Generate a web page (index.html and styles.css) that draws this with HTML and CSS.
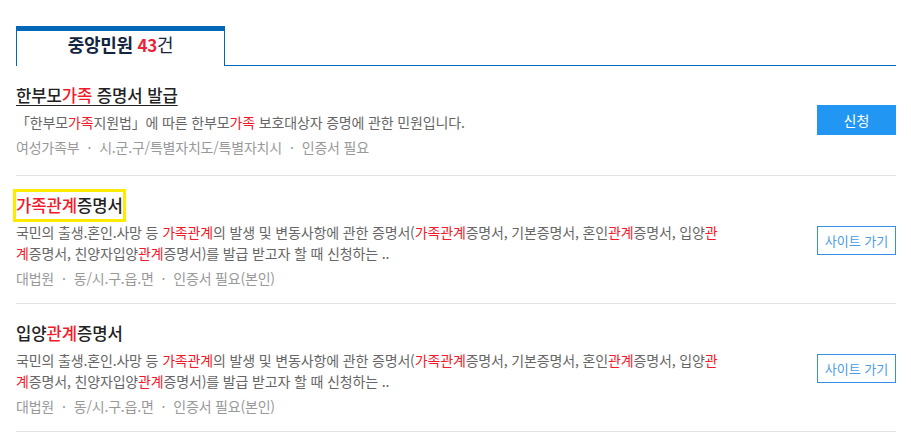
FILE: index.html
```html
<!DOCTYPE html>
<html lang="ko">
<head>
    <meta charset="UTF-8">
    <meta name="viewport" content="width=device-width, initial-scale=1.0">
    <title>중앙민원</title>
    <link rel="stylesheet" href="styles.css">
</head>
<body>
    <div class="container">
        <div class="tabs">
            <div class="tab">중앙민원 <span class="count">43</span><span class="unit">건</span></div>
        </div>

        <ul class="list">
            <li class="item">
                <div class="info">
                    <a class="title underline" href="#">한부모<span class="hl">가족</span> 증명서 발급</a>
                    <p class="desc">「한부모<span class="hl">가족</span>지원법」에 따른 한부모<span class="hl">가족</span> 보호대상자 증명에 관한 민원입니다.</p>
                    <p class="meta">여성가족부<span class="dot">·</span>시.군.구/특별자치도/특별자치시<span class="dot">·</span>인증서 필요</p>
                </div>
                <button class="btn btn-apply">신청</button>
            </li>
            <li class="item">
                <div class="info">
                    <a class="title focused" href="#"><span class="hl">가족관계</span>증명서</a>
                    <p class="desc">국민의 출생.혼인.사망 등 <span class="hl">가족관계</span>의 발생 및 변동사항에 관한 증명서(<span class="hl">가족관계</span>증명서, 기본증명서, 혼인<span class="hl">관계</span>증명서, 입양<span class="hl">관계</span>증명서, 친양자입양<span class="hl">관계</span>증명서)를 발급 받고자 할 때 신청하는 ..</p>
                    <p class="meta">대법원<span class="dot">·</span>동/시.구.읍.면<span class="dot">·</span>인증서 필요(본인)</p>
                </div>
                <button class="btn btn-site">사이트 가기</button>
            </li>
            <li class="item">
                <div class="info">
                    <a class="title" href="#">입양<span class="hl">관계</span>증명서</a>
                    <p class="desc">국민의 출생.혼인.사망 등 <span class="hl">가족관계</span>의 발생 및 변동사항에 관한 증명서(<span class="hl">가족관계</span>증명서, 기본증명서, 혼인<span class="hl">관계</span>증명서, 입양<span class="hl">관계</span>증명서, 친양자입양<span class="hl">관계</span>증명서)를 발급 받고자 할 때 신청하는 ..</p>
                    <p class="meta">대법원<span class="dot">·</span>동/시.구.읍.면<span class="dot">·</span>인증서 필요(본인)</p>
                </div>
                <button class="btn btn-site">사이트 가기</button>
            </li>
        </ul>
    </div>
</body>
</html>
```

FILE: styles.css
```css
body {
    margin: 0;
    background: #fff;
    font-family: "Noto Sans CJK KR", "Noto Sans", sans-serif;
    color: #222;
}
.container {
    width: 880px;
    padding: 26px 0 0 16px;
}
.tabs {
    display: flex;
    border-bottom: 1px solid #0068b7;
}
.tab {
    width: 207px;
    height: 34px;
    margin-bottom: -1px;
    padding-top: 1px;
    border: 1px solid #0068b7;
    border-top: 5px solid #0068b7;
    border-bottom: none;
    background: #fff;
    text-align: center;
    font-size: 18px;
    font-weight: 700;
    line-height: 24px;
    color: #14253f;
    letter-spacing: -0.3px;
}
.tab .count {
    color: #ec2237;
    font-size: 17px;
}
.tab .unit {
    font-weight: 400;
}
.list {
    list-style: none;
    margin: 0;
    padding: 0;
}
.item {
    display: flex;
    align-items: center;
    justify-content: space-between;
    padding: 16px 0 15px;
    border-bottom: 1px solid #e2e2e2;
}
.item:first-child {
    padding-bottom: 18px;
}
.info {
    width: 706px;
}
.title {
    display: inline-block;
    font-size: 16.7px;
    font-weight: 500;
    line-height: 27px;
    color: #222;
    text-decoration: none;
    letter-spacing: -0.1px;
}
.title.underline {
    text-decoration: underline;
    text-underline-offset: 3px;
}
.title.focused {
    outline: 3px solid #ffea00;
}
.hl {
    color: #f2192b;
}
.desc {
    margin: 3px 0 0;
    font-size: 14px;
    line-height: 21px;
    color: #666;
    letter-spacing: -0.15px;
}
.meta {
    margin: 4px 0 0;
    font-size: 14px;
    line-height: 20px;
    color: #999;
    letter-spacing: -0.2px;
}
.meta .dot {
    margin: 0 8px;
}
.btn {
    width: 79px;
    font-family: inherit;
    cursor: pointer;
}
.btn-apply {
    height: 30px;
    background: #2196f3;
    color: #fff;
    border: none;
    font-size: 14px;
}
.btn-site {
    height: 29px;
    background: #fff;
    color: #4b9be8;
    border: 1px solid #3591e6;
    font-size: 13px;
}
```
